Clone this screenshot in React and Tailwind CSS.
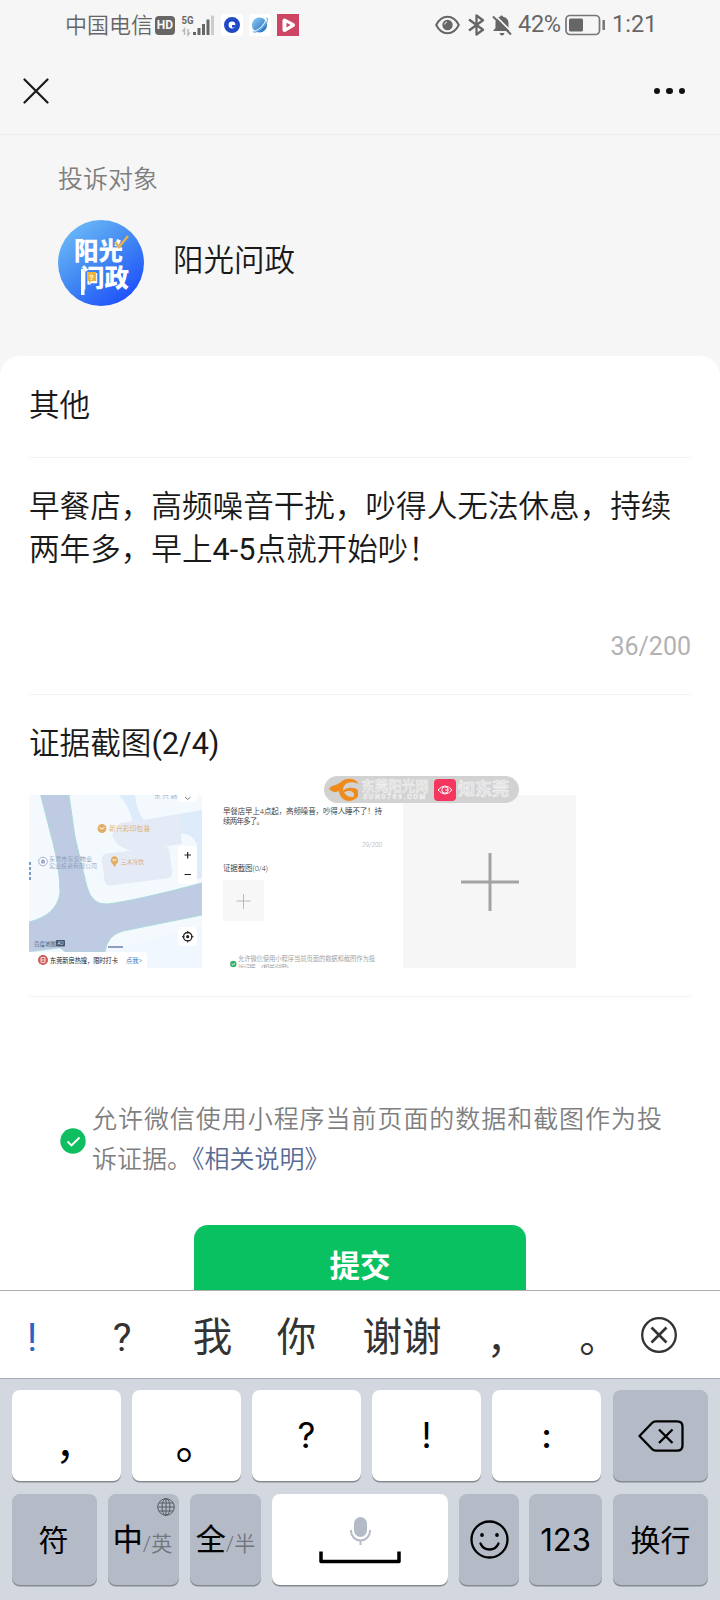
const candidates = [
  { text: "!", box: "w-16", tone: "text-[#2b62c9]" },
  { text: "?", box: "w-[116px]", tone: "text-[#333]" },
  { text: "我", box: "w-[65px]", tone: "text-[#333]" },
  { text: "你", box: "w-[103px]", tone: "text-[#333]" },
  { text: "谢谢", box: "w-[108px]", tone: "text-[#333]" },
  { text: "，", box: "w-[85px] pt-1 pl-[16px]", tone: "text-[#333]" },
  { text: "。", box: "w-[92px] pt-[2px] pl-6", tone: "text-[#333]" },
];

const punctuation = [
  { text: "，", inner: "pt-5 pl-[18px] text-[40px]" },
  { text: "。", inner: "pt-4 pl-[22px] text-[44px]" },
  { text: "?", inner: "font-[Inter] text-[35px]" },
  { text: "!", inner: "font-[Inter] text-[35px]" },
  { text: ":", inner: "font-[Inter] text-[35px] font-medium" },
];

function Key({ className = "", dark = false, children }) {
  return (
    <button
      type="button"
      className={`flex shrink-0 items-center justify-center rounded-[8px] text-black shadow-[0_1.5px_0_#858990] ${
        dark ? "bg-[#b4bbc7]" : "bg-white"
      } ${className}`}
    >
      {children}
    </button>
  );
}

function EyeIcon() {
  return (
    <svg className="h-5 w-[25px]" viewBox="0 0 25 20" fill="none">
      <path d="M1.200 10C4 4.400 8 1.800 12.500 1.800S21 4.400 23.800 10C21 15.600 17 18.200 12.500 18.200S4 15.600 1.200 10Z" stroke="#666" strokeWidth="2" />
      <circle cx="12.500" cy="10" r="5.200" fill="#666" />
      <path d="M9.500 9.500A3 3 0 0 1 12 7" stroke="#ddd" strokeWidth="1.200" />
    </svg>
  );
}

function BluetoothIcon() {
  return (
    <svg className="h-[22px] w-[17px]" viewBox="0 0 17 22" fill="none" stroke="#666" strokeWidth="2.300" strokeLinejoin="round">
      <path d="M1 5.500L15 15.800L8.500 20.500V1.500L15 6.200L1 16.500" />
    </svg>
  );
}

function BellOffIcon() {
  return (
    <svg className="h-[21px] w-5" viewBox="0 0 20 21">
      <path d="M5.500 3Q6.500 2 8 1.800Q8.100.5 9.500.5T11 1.800Q16.500 3 16.500 8V13L18 16H1L3.500 13V6.500Z" fill="#666" />
      <path d="M7.500 18H12.500Q11.800 20.500 10 20.500T7.500 18Z" fill="#666" />
      <path d="M2.800.2L20.500 17.800" stroke="#f6f6f6" strokeWidth="1.800" />
      <path d="M1 1.500L19 19.500" stroke="#666" strokeWidth="2" />
    </svg>
  );
}

function StatusBar() {
  return (
    <div className="flex h-12 shrink-0 items-center pt-[2px] pl-[65px] text-[22px] text-[#666]">
      <span className="w-[90px] font-[350]">中国电信</span>
      <span className="grid h-[19px] w-5 place-items-center rounded-[4px] bg-[#666] text-[12px] leading-none font-bold text-[#f6f6f6]">HD</span>
      <svg className="ml-[6px] h-[23px] w-[34px]" viewBox="0 0 34 23">
        <text x="0.500" y="10" fontSize="11.500" fontWeight="700" textLength="12" lengthAdjust="spacingAndGlyphs" fill="#666">5G</text>
        <path d="M3.500 21V15L1.500 17.500M7 15V21L9 18.500" fill="none" stroke="#b8b8b8" strokeWidth="1.500" />
        <path d="M12 18h3v3h-3zM16.500 14h3v7h-3zM21 10h3v11h-3zM25.500 5.500h3V21h-3z" fill="#666" />
        <path d="M30 1.500h3V21h-3z" fill="#ccc" />
      </svg>
      <svg className="ml-[6px] h-[22px] w-[22px]" viewBox="0 0 22 22">
        <rect width="22" height="22" rx="3" fill="#fff" />
        <circle cx="11" cy="11" r="5.700" fill="none" stroke="#1f49c5" strokeWidth="4.600" />
        <path d="M11 11h3.500v2.500H11z" fill="#1f49c5" />
      </svg>
      <svg className="ml-[6px] h-[22px] w-[22px]" viewBox="0 0 22 22">
        <defs>
          <linearGradient id="planet" x1="0" y1="0" x2="1" y2="1">
            <stop offset="0" stopColor="#8fd0f3" />
            <stop offset="1" stopColor="#1b63bb" />
          </linearGradient>
        </defs>
        <rect width="22" height="22" rx="3" fill="#fff" />
        <circle cx="10.500" cy="11" r="7.600" fill="url(#planet)" />
        <path d="M5 17.500C10 16 15.500 11 17 6" fill="none" stroke="#d7ebfa" strokeWidth="1.200" />
        <path d="M4 17.500C5 20 13 16 17 10C19.500 6 19 3.500 17 4.500" fill="none" stroke="#6aa8e0" strokeWidth="1" />
      </svg>
      <svg className="ml-[6px] h-[22px] w-[22px]" viewBox="0 0 22 22">
        <rect width="22" height="22" fill="#ce4563" />
        <path d="M7.500 6.500L16 11L7.500 16Z" fill="#fff" stroke="#fff" strokeWidth="4" strokeLinejoin="round" />
        <path d="M9.500 8.800L13.500 11L9.500 13.500Z" fill="#ce4563" />
      </svg>
      <div className="ml-[136px] flex items-center">
        <EyeIcon />
        <span className="ml-2"><BluetoothIcon /></span>
        <span className="ml-[7px]"><BellOffIcon /></span>
        <span className="ml-[6px] w-[43px] text-[23.500px] tracking-[-0.3px]">42%</span>
        <svg className="ml-[4px] h-[22px] w-[41px]" viewBox="0 0 41 22">
          <rect x="1" y="1.500" width="33.500" height="19" rx="4" fill="none" stroke="#777" strokeWidth="1.700" />
          <rect x="4" y="4.500" width="14" height="13" rx="1.500" fill="#666" />
          <path d="M38.700 6v10" stroke="#777" strokeWidth="2.500" />
        </svg>
        <span className="ml-[6px] text-[23.500px]">1:21</span>
      </div>
    </div>
  );
}

function Avatar() {
  return (
    <svg className="h-[86px] w-[86px]" viewBox="0 0 86 86">
      <defs>
        <linearGradient id="sky" x1="0.150" y1="0.100" x2="0.800" y2="0.950">
          <stop offset="0" stopColor="#69b6f8" />
          <stop offset="0.500" stopColor="#4086f2" />
          <stop offset="1" stopColor="#1e50fc" />
        </linearGradient>
      </defs>
      <circle cx="43" cy="43" r="43" fill="url(#sky)" />
      <g fill="#fff" fontSize="25" fontWeight="900">
        <text x="16" y="40" textLength="49" lengthAdjust="spacingAndGlyphs">阳光</text>
        <text x="22" y="67" textLength="49" lengthAdjust="spacingAndGlyphs">问政</text>
      </g>
      <path d="M23 49v26h3.500V49z" fill="#fff" />
      <path d="M57 22L61 27L70 16" fill="none" stroke="#e3b253" strokeWidth="2.500" />
      <path d="M29 52h9v9h-5l-2 3v-3h-2z" fill="#efb63a" />
      <text x="31.500" y="59.500" fontSize="8" fontWeight="700" fill="#fff">?</text>
    </svg>
  );
}

function MapThumb() {
  return (
    <svg className="h-[173px] w-[173px]" viewBox="0 0 173 173">
      <rect width="173" height="173" fill="#f4f9fe" />
      <path d="M90 0H106C107 10 111 21 115 25L173 15V83L168 84V49Q162 37 151 39L124 31Q106 35 104 28Q101 12 90 0Z" fill="#deebfb" />
      <path d="M91 28L150 20L153 49L103 56Q86 51 83 40Z" fill="#e4eaf6" />
      <rect x="74" y="55" width="68" height="32" rx="5" transform="rotate(-7 108 71)" fill="#e4eaf6" />
      <path d="M11.700 0H40L46 42L58 92Q63 110 78 109Q105 106 173 88V120L94 136Q78 140 76 157H36L31 153L0 157V127Q28 120 31 98Q31 75 24 48Z" fill="#becbe3" stroke="#aadbd9" strokeWidth="1" />
      <path d="M0 157L31 153L36 157H76L173 132V173H0Z" fill="#edf5fd" opacity=".55" />
      <path d="M1 67v18" stroke="#537fb0" strokeWidth="1.500" strokeDasharray="3 2" />
      <g fontSize="6.600">
        <text x="80" y="36" textLength="41" fill="#e0ad67">新兴彩印包装</text>
        <text x="92" y="69" textLength="23" fontSize="5.800" fill="#e0a05b">三木冷饮</text>
        <text x="20" y="65.500" textLength="43" fontSize="6.100" fill="#8d99b4">东莞市东安物业</text>
        <text x="20" y="73" textLength="48" fontSize="6" fill="#8d99b4">实业投资有限公司</text>
        <text x="125" y="3" textLength="23" fill="#9aacc8">东兴路</text>
      </g>
      <path d="M73 29a4.500 4.500 0 1 1 0 9a4.500 4.500 0 0 1 0-9M85.500 61a4.500 4.500 0 0 1 2 8l-2 3l-2-3a4.500 4.500 0 0 1 2-8" fill="#e2ae66" />
      <path d="M70.500 32.500q2.500 3 5 0M83.500 65h4" stroke="#fff" fill="none" />
      <circle cx="14" cy="66.500" r="4.300" fill="#fff" stroke="#a2adca" />
      <path d="M12 68.500v-3l2-1.500l2 1.500v3z" fill="#a2adca" />
      <g fill="#fff">
        <rect x="149" y="-6" width="19" height="13" rx="4" />
        <rect x="149" y="51" width="19" height="38" rx="4" />
        <rect x="149" y="132" width="19" height="19" rx="4" />
        <path d="M0 157h114q4 0 4 4v12H0z" />
      </g>
      <path d="M156 2l2.700 2.500L161.400 2" fill="none" stroke="#777" />
      <path d="M155.500 60h6.500M158.700 57v6.500M155.500 79.500h6.500" stroke="#222" strokeWidth="1.200" />
      <circle cx="158.700" cy="141.700" r="4.200" fill="none" stroke="#222" strokeWidth="1.300" />
      <circle cx="158.700" cy="141.700" r="1.600" fill="#222" />
      <path d="M158.700 136v2.500M158.700 145v2.500M153 141.700h2.500M162 141.700h2.500" stroke="#222" />
      <path d="M79 152h15" stroke="#8d9fbe" strokeWidth="2" />
      <text x="5" y="151" fontSize="5.500" textLength="22" fill="#45546f">百度地图</text>
      <rect x="27" y="145" width="9" height="6.500" rx="1" fill="#45546f" />
      <text x="28.200" y="150" fontSize="5" fill="#fff">AD</text>
      <circle cx="14" cy="165" r="5" fill="#cf5b56" />
      <path d="M12 162.500h4v5h-4zM12 165h4" stroke="#fff" strokeWidth=".8" fill="none" />
      <text x="21" y="167.500" fontSize="6.300" textLength="68" fontWeight="400" fill="#222">东莞新房热搜，限时打卡</text>
      <text x="97" y="167.500" fontSize="6.300" textLength="16" fill="#2a70bd">点我&gt;</text>
    </svg>
  );
}

function FormThumb() {
  return (
    <svg className="h-[173px] w-[173px]" viewBox="0 0 173 173">
      <rect width="173" height="173" fill="#fff" />
      <g fontSize="7.500" fill="#333">
        <text x="7" y="18.500" textLength="159">早餐店早上4点起，高频噪音，吵得人睡不了！持</text>
        <text x="7" y="29" textLength="41">续两年多了。</text>
        <text x="7" y="75.500" textLength="45">证据截图(0/4)</text>
      </g>
      <text x="146" y="51.500" fontSize="6.500" textLength="20" fill="#aaa">29/200</text>
      <rect x="7" y="85" width="41" height="41" fill="#f7f7f7" />
      <path d="M20.500 106h14M27.500 99v15" stroke="#aaa" strokeWidth=".8" />
      <circle cx="17.300" cy="169" r="3.200" fill="#37b36b" />
      <path d="M15.800 169l1.200 1.200l2-2.200" fill="none" stroke="#fff" strokeWidth=".8" />
      <g fontSize="6.300" fill="#999">
        <text x="22" y="165.500" textLength="137">允许微信使用小程序当前页面的数据和截图作为投</text>
        <text x="22" y="174.500" textLength="54">诉证据。《相关说明》</text>
      </g>
    </svg>
  );
}

function Watermark() {
  return (
    <div className="absolute -top-[19px] left-[295px] flex h-[27px] w-[195px] items-center rounded-full bg-[#d2d2d2]">
      <svg className="ml-[5px] h-6 w-[30px]" viewBox="0 0 30 24">
        <path d="M0 11C2 7 7 8 12 4C17-1 27 0 29.500 6C24 3 17 4 15 8L14 11C15 17 20 21 29 18C26 23 18 25 13 20C11 18 10 15 10 13C6 15 3 14 0 11Z" fill="#ef8a1c" />
        <path d="M14 13Q18 9 24 10Q28 10 29 13V18Q26 22 24 20Q27 15 22 13Q17 12 14 16Z" fill="#ef8a1c" />
      </svg>
      <div className="ml-[2px] flex w-[68px] flex-col items-center text-[#dedede] [-webkit-text-stroke:0.4px_#f6f6f6]">
        <span className="text-[13.500px] leading-[15px] font-bold whitespace-nowrap">东莞阳光网</span>
        <span className="text-[7px] leading-[7px] font-bold tracking-[1.5px]">SUN0769.COM</span>
      </div>
      <svg className="ml-[5px] h-[22px] w-[22px] shrink-0" viewBox="0 0 22 22">
        <rect width="22" height="22" rx="4" fill="#f5365f" />
        <path d="M4 11Q11 3 18 11Q11 19 4 11Z" fill="none" stroke="#fff" />
        <circle cx="11" cy="11" r="3.200" fill="none" stroke="#fff" />
        <path d="M11 11h3" stroke="#fff" />
      </svg>
      <span className="ml-[2px] text-[17px] leading-none font-bold whitespace-nowrap text-[#dedede] [-webkit-text-stroke:0.5px_#f8f8f8]">知东莞</span>
    </div>
  );
}

function Keyboard() {
  return (
    <section className="h-[310px] shrink-0 border-t border-[#adadad] bg-[#d3d7df]">
      <div className="flex h-[88px] items-center border-b border-[#a9abb0] bg-white text-[39.500px]">
        {candidates.map((item) => (
          <span key={item.text} className={`mt-[7px] text-center whitespace-nowrap ${item.box} ${item.tone}`}>
            {item.text}
          </span>
        ))}
        <svg className="ml-2 h-9 w-9" viewBox="0 0 36 36" fill="none" stroke="#333" strokeWidth="2.300">
          <circle cx="18" cy="18" r="16.800" />
          <path d="M10.500 10.500l15 15M25.500 10.500l-15 15" strokeWidth="2.700" />
        </svg>
      </div>
      <div className="flex gap-[11px] px-3 pt-[11px]">
        {punctuation.map((item) => (
          <Key key={item.text} className="h-[91px] w-[109px]">
            <span className={item.inner}>{item.text}</span>
          </Key>
        ))}
        <Key dark className="ml-[1px] h-[91px] w-[95px]">
          <svg className="h-8 w-[46px]" viewBox="0 0 46 32" fill="none" stroke="#000" strokeWidth="2.300" strokeLinejoin="round">
            <path d="M1.500 16L14 3Q15.500 1.300 18 1.300H39Q44.500 1.300 44.500 6.500V25.500Q44.500 30.700 39 30.700H18Q15.500 30.700 14 29Z" />
            <path d="M21 9.500l13.500 13.500M34.500 9.500L21 23" />
          </svg>
        </Key>
      </div>
      <div className="flex gap-[11px] px-3 pt-[13px] text-[30px]">
        <Key dark className="h-[91px] w-[85px] pr-[2px] pt-[2px]">符</Key>
        <Key dark className="relative h-[91px] w-[71px] pr-[2px]">
          <span className="[-webkit-text-stroke:0.2px_#000]">中</span>
          <span className="pt-[11px] text-[21px] font-[350] text-[#70757e]">/英</span>
          <svg className="absolute top-1 right-[4px] h-[18px] w-[18px]" viewBox="0 0 18 18" fill="none" stroke="#555a62">
            <circle cx="9" cy="9" r="8.300" />
            <ellipse cx="9" cy="9" rx="4" ry="8.300" />
            <path d="M9 .7v16.600M.7 9h16.600M2 5h14M2 13h14" />
          </svg>
        </Key>
        <Key dark className="h-[91px] w-[71px]">
          <span className="[-webkit-text-stroke:0.2px_#000]">全</span>
          <span className="pt-[11px] text-[21px] font-[350] text-[#70757e]">/半</span>
        </Key>
        <Key className="h-[91px] w-[176px]">
          <svg className="h-12 w-[82px]" viewBox="0 0 82 48" fill="none">
            <rect x="35" y="1" width="13" height="20" rx="6.500" fill="#b4bbc7" />
            <path d="M32 14v1a9.500 9.500 0 0 0 19 0v-1M41.500 25v4" stroke="#b4bbc7" strokeWidth="2" />
            <path d="M2 35.500v10h78v-10" stroke="#000" strokeWidth="3.500" strokeLinejoin="round" />
          </svg>
        </Key>
        <Key dark className="h-[91px] w-[60px]">
          <svg className="h-[39px] w-[39px]" viewBox="0 0 39 39" fill="none" stroke="#000" strokeWidth="2.300" strokeLinecap="round">
            <circle cx="19.500" cy="19.500" r="18" />
            <circle cx="12" cy="15" r="1.900" fill="#000" stroke="none" />
            <circle cx="27" cy="15" r="1.900" fill="#000" stroke="none" />
            <path d="M10.500 23.500Q13 29.500 19.500 29.500T28.500 23.500" />
          </svg>
        </Key>
        <Key dark className="-ml-[1px] h-[91px] w-[73px] pt-[2px] font-[Inter] text-[31px]">123</Key>
        <Key dark className="h-[91px] w-[95px] pt-[2px]">换行</Key>
      </div>
    </section>
  );
}

export default function App() {
  return (
    <div className="flex h-[1600px] w-[720px] flex-col overflow-hidden bg-[#f6f6f6] font-[Roboto,'Noto_Sans_CJK_SC',sans-serif] text-[#1a1a1a]">
      <div className="flex h-[1290px] shrink-0 flex-col overflow-hidden">
        <StatusBar />
        <header className="flex h-[87px] shrink-0 items-center justify-between border-b border-[#ececec] pr-[35px] pl-[23px]">
          <svg className="h-[26px] w-[26px]" viewBox="0 0 26 26" stroke="#1a1a1a" strokeWidth="2.200" strokeLinecap="round">
            <path d="M1.500 1.500l23 23M24.500 1.500l-23 23" />
          </svg>
          <div className="flex gap-[6px]">
            <i className="h-[6.5px] w-[6.5px] rounded-full bg-[#111]" />
            <i className="h-[6.5px] w-[6.5px] rounded-full bg-[#111]" />
            <i className="h-[6.5px] w-[6.5px] rounded-full bg-[#111]" />
          </div>
        </header>

        <section className="h-[221px] shrink-0 px-[58px] pt-[27px]">
          <p className="text-[25px] leading-[36px] font-[350] text-[#7f7f7f]">投诉对象</p>
          <div className="mt-[22px] flex items-center gap-[29px]">
            <Avatar />
            <span className="pb-1 text-[30.500px] font-[350]">阳光问政</span>
          </div>
        </section>

        <main className="shrink-0 rounded-t-[20px] bg-white px-[29px] text-[30.600px] font-[350]">
          <div className="flex h-[102px] items-center border-b border-[#f2f2f2] pb-[2px]">其他</div>
          <div className="flex h-[237px] flex-col border-b border-[#f2f2f2] pt-[27px]">
            <p className="leading-[43px] whitespace-nowrap">
              早餐店，高频噪音干扰，吵得人无法休息，持续
              <br />
              两年多，早上<span className="font-normal">4-5</span>点就开始吵！
            </p>
            <p className="mt-[57px] text-right text-[25px] leading-[38px] font-normal text-[#b2b2b2]">36/200</p>
          </div>
          <div className="h-[302px] border-b border-[#f2f2f2] pt-[26px]">
            <h2 className="leading-[46px]">
              证据截图<span className="font-normal">(2/4)</span>
            </h2>
            <div className="relative mt-[28px] flex gap-[14px]">
              <MapThumb />
              <FormThumb />
              <div className="grid h-[173px] w-[173px] place-items-center bg-[#f6f6f6]">
                <svg className="h-[58px] w-[58px]" viewBox="0 0 58 58" stroke="#a3a3a3" strokeWidth="3">
                  <path d="M0 29h58M29 0v58" />
                </svg>
              </div>
              <Watermark />
            </div>
          </div>
          <div className="flex items-center pt-[103px] pl-[31px] text-[25px] leading-[40px] text-[#7f7f7f]">
            <svg className="mt-[2px] h-[26px] w-[26px] shrink-0" viewBox="0 0 26 26" fill="none">
              <circle cx="13" cy="13" r="12.700" fill="#0fbe60" />
              <path d="M7.500 13.500l4 4L19.500 9.500" stroke="#fff" strokeWidth="1.900" />
            </svg>
            <p className="ml-[6px] whitespace-nowrap">
              <span className="tracking-[0.95px]">允许微信使用小程序当前页面的数据和截图作为投</span>
              <br />
              诉证据。<a className="text-[#576b95]">《相关说明》</a>
            </p>
          </div>
          <button type="button" className="mx-auto mt-[45px] flex h-[83px] w-[332px] items-center justify-center rounded-[14px] bg-[#09c160] text-[30.500px] font-bold text-white">
            提交
          </button>
        </main>
      </div>
      <Keyboard />
    </div>
  );
}
